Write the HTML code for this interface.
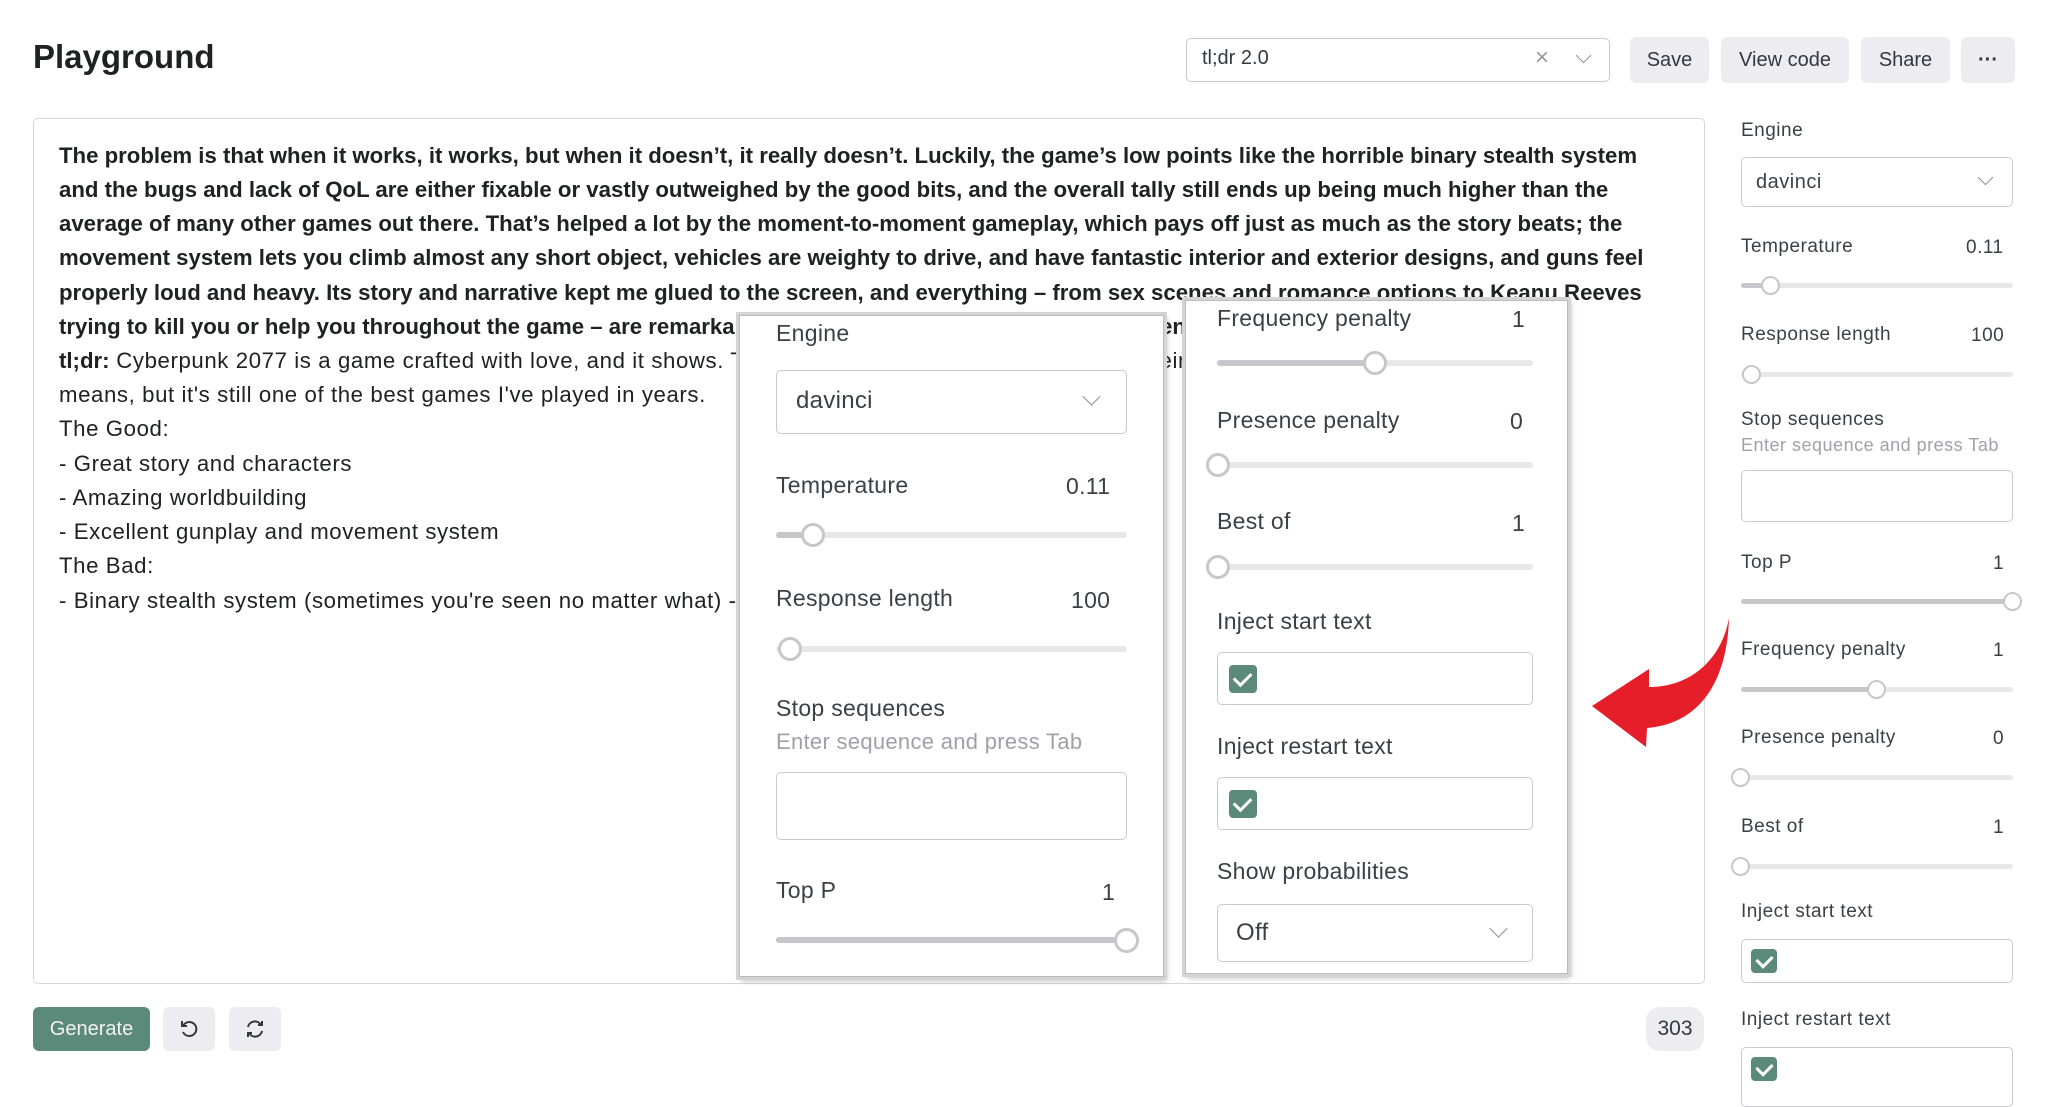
<!DOCTYPE html>
<html><head><meta charset="utf-8"><style>
*{box-sizing:border-box;margin:0;padding:0}
body{width:2048px;height:1094px;position:relative;overflow:hidden;background:#fff;font-family:"Liberation Sans",sans-serif;color:#353740}
.a{position:absolute;white-space:nowrap}
.btn{position:absolute;background:#ececf1;border-radius:6px;font-size:20px;color:#353740;display:flex;align-items:center;justify-content:center}
.ln{position:absolute;left:59px;font-size:22.2px;line-height:34px;white-space:nowrap;color:#202123;letter-spacing:0.6px}
.b{font-weight:bold;letter-spacing:0}
.box{position:absolute;border:1.5px solid #c9c9cf;border-radius:5px;background:#fff}
.tr{position:absolute;height:6px;border-radius:3px;background:#e8e8ea}
.fl{position:absolute;height:6px;border-radius:3px;background:#c6c6cb;left:0;top:0}
.th{position:absolute;border-radius:50%;background:#fff;border:3px solid #c6c6cb}
.chev{position:absolute;width:13px;height:13px;border-right:1.6px solid #8e8ea0;border-bottom:1.6px solid #8e8ea0;transform:rotate(45deg)}
.cb{position:absolute;background:#5b8a7b;border-radius:4px}
.cb:after{content:"";position:absolute;left:30%;top:14%;width:30%;height:50%;border-right:3px solid #fff;border-bottom:3px solid #fff;transform:rotate(45deg)}
.pop{position:absolute;background:#fff;border:1px solid #bbb;box-shadow:0 0 0 3px #d4d4d4,2px 3px 6px rgba(0,0,0,.35)}
.pl{font-size:23px;color:#3d3f46;letter-spacing:0.3px}
.sl{font-size:19px;color:#3d3f46;letter-spacing:0.5px}
</style></head><body>
<div class="a" style="left:33px;top:38px;font-size:33px;font-weight:bold;color:#202123">Playground</div>

<div class="box" style="left:1186px;top:38px;width:424px;height:44px"></div>
<div class="a" style="left:1202px;top:47px;font-size:20px">tl;dr 2.0</div>
<div class="a" style="left:1535px;top:44px;font-size:24px;color:#999">×</div>
<div class="chev" style="left:1578px;top:50px;width:11px;height:11px"></div>
<div class="btn" style="left:1630px;top:37px;width:79px;height:46px">Save</div>
<div class="btn" style="left:1721px;top:37px;width:128px;height:46px">View code</div>
<div class="btn" style="left:1861px;top:37px;width:89px;height:46px">Share</div>
<div class="btn" style="left:1961px;top:37px;width:54px;height:46px;font-weight:bold">···</div>

<div class="box" style="left:33px;top:118px;width:1672px;height:866px;border-color:#d5d5da"></div>
<div class="ln b" style="top:139px">The problem is that when it works, it works, but when it doesn’t, it really doesn’t. Luckily, the game’s low points like the horrible binary stealth system</div>
<div class="ln b" style="top:173px">and the bugs and lack of QoL are either fixable or vastly outweighed by the good bits, and the overall tally still ends up being much higher than the</div>
<div class="ln b" style="top:207px">average of many other games out there. That’s helped a lot by the moment-to-moment gameplay, which pays off just as much as the story beats; the</div>
<div class="ln b" style="top:241px">movement system lets you climb almost any short object, vehicles are weighty to drive, and have fantastic interior and exterior designs, and guns feel</div>
<div class="ln b" style="top:276px">properly loud and heavy. Its story and narrative kept me glued to the screen, and everything – from sex scenes and romance options to Keanu Reeves</div>
<div class="ln b" style="top:310px">trying to kill you or help you throughout the game – are remarkable and memorable characters and moments.</div>
<div class="ln" style="top:344px"><b style="letter-spacing:0">tl;dr:</b> Cyberpunk 2077 is a game crafted with love, and it shows. The bugs and rough edges keep it from being perfect by any</div>
<div class="ln" style="top:378px">means, but it's still one of the best games I've played in years.</div>
<div class="ln" style="top:412px">The Good:</div>
<div class="ln" style="top:447px">- Great story and characters</div>
<div class="ln" style="top:481px">- Amazing worldbuilding</div>
<div class="ln" style="top:515px">- Excellent gunplay and movement system</div>
<div class="ln" style="top:549px">The Bad:</div>
<div class="ln" style="top:584px">- Binary stealth system (sometimes you're seen no matter what) - bugs</div>

<div class="btn" style="left:33px;top:1007px;width:117px;height:44px;background:#5b8a7b;color:#f2f2f2">Generate</div>
<div class="btn" style="left:163px;top:1007px;width:52px;height:44px">
<svg width="22" height="22" viewBox="0 0 22 22" fill="none" stroke="#353740" stroke-width="2"><path d="M5 8a7 7 0 1 1 0 6"/><path d="M4 3v5h5"/></svg></div>
<div class="btn" style="left:229px;top:1007px;width:52px;height:44px">
<svg width="22" height="22" viewBox="0 0 22 22" fill="none" stroke="#353740" stroke-width="2"><path d="M4 9a7 7 0 0 1 13-2"/><path d="M18 3v4h-4"/><path d="M18 13a7 7 0 0 1-13 2"/><path d="M4 19v-4h4"/></svg></div>
<div class="btn" style="left:1646px;top:1007px;width:58px;height:44px;border-radius:14px;font-size:21px">303</div>

<!-- popup 1 -->
<div class="pop" style="left:739px;top:315px;width:425px;height:662px"></div>
<div class="a pl" style="left:776px;top:320px">Engine</div>
<div class="box" style="left:776px;top:370px;width:351px;height:64px"></div>
<div class="a pl" style="left:796px;top:387px;font-size:24px">davinci</div>
<div class="chev" style="left:1085px;top:390px"></div>
<div class="a pl" style="left:776px;top:472px">Temperature</div>
<div class="a pl" style="left:1066px;top:473px">0.11</div>
<div class="tr" style="left:776px;top:532px;width:351px"><div class="fl" style="width:38px"></div></div>
<div class="th" style="left:801px;top:523px;width:24px;height:24px"></div>
<div class="a pl" style="left:776px;top:585px">Response length</div>
<div class="a pl" style="left:1071px;top:587px">100</div>
<div class="tr" style="left:776px;top:646px;width:351px"></div>
<div class="th" style="left:778px;top:637px;width:24px;height:24px"></div>
<div class="a pl" style="left:776px;top:695px">Stop sequences</div>
<div class="a pl" style="left:776px;top:729px;color:#a0a0a8;font-size:22px">Enter sequence and press Tab</div>
<div class="box" style="left:776px;top:772px;width:351px;height:68px"></div>
<div class="a pl" style="left:776px;top:877px">Top P</div>
<div class="a pl" style="left:1102px;top:879px">1</div>
<div class="tr" style="left:776px;top:937px;width:351px"><div class="fl" style="width:351px"></div></div>
<div class="th" style="left:1114px;top:928px;width:25px;height:25px"></div>

<!-- popup 2 -->
<div class="pop" style="left:1185px;top:300px;width:383px;height:674px"></div>
<div class="a pl" style="left:1217px;top:305px">Frequency penalty</div>
<div class="a pl" style="left:1512px;top:306px">1</div>
<div class="tr" style="left:1217px;top:360px;width:316px"><div class="fl" style="width:158px"></div></div>
<div class="th" style="left:1363px;top:351px;width:24px;height:24px"></div>
<div class="a pl" style="left:1217px;top:407px">Presence penalty</div>
<div class="a pl" style="left:1510px;top:408px">0</div>
<div class="tr" style="left:1217px;top:462px;width:316px"></div>
<div class="th" style="left:1206px;top:453px;width:24px;height:24px"></div>
<div class="a pl" style="left:1217px;top:508px">Best of</div>
<div class="a pl" style="left:1512px;top:510px">1</div>
<div class="tr" style="left:1217px;top:564px;width:316px"></div>
<div class="th" style="left:1206px;top:555px;width:24px;height:24px"></div>
<div class="a pl" style="left:1217px;top:608px">Inject start text</div>
<div class="box" style="left:1217px;top:652px;width:316px;height:53px"></div>
<div class="cb" style="left:1229px;top:665px;width:28px;height:28px"></div>
<div class="a pl" style="left:1217px;top:733px">Inject restart text</div>
<div class="box" style="left:1217px;top:777px;width:316px;height:53px"></div>
<div class="cb" style="left:1229px;top:790px;width:28px;height:28px"></div>
<div class="a pl" style="left:1217px;top:858px">Show probabilities</div>
<div class="box" style="left:1217px;top:904px;width:316px;height:58px"></div>
<div class="a pl" style="left:1236px;top:919px;font-size:24px">Off</div>
<div class="chev" style="left:1492px;top:922px"></div>

<!-- arrow -->
<svg class="a" style="left:0;top:0" width="2048" height="1094"><path d="M1592 706 L1649 669 L1649 687 C1692 687 1722 658 1729 618 C1727 684 1698 724 1647 728 L1646 747 Z" fill="#e61e2a"/></svg>

<!-- sidebar -->
<div class="a sl" style="left:1741px;top:120px">Engine</div>
<div class="box" style="left:1741px;top:157px;width:272px;height:50px"></div>
<div class="a sl" style="left:1756px;top:171px;font-size:20px">davinci</div>
<div class="chev" style="left:1980px;top:172px;width:11px;height:11px"></div>
<div class="a sl" style="left:1741px;top:236px">Temperature</div>
<div class="a sl" style="left:1966px;top:237px">0.11</div>
<div class="tr" style="left:1741px;top:283px;width:272px;height:5px"><div class="fl" style="width:28px;height:5px"></div></div>
<div class="th" style="left:1761px;top:276px;width:19px;height:19px;border-width:2.5px"></div>
<div class="a sl" style="left:1741px;top:324px">Response length</div>
<div class="a sl" style="left:1971px;top:325px">100</div>
<div class="tr" style="left:1741px;top:372px;width:272px;height:5px"></div>
<div class="th" style="left:1742px;top:365px;width:19px;height:19px;border-width:2.5px"></div>
<div class="a sl" style="left:1741px;top:409px">Stop sequences</div>
<div class="a sl" style="left:1741px;top:435px;color:#a0a0a8;font-size:18px">Enter sequence and press Tab</div>
<div class="box" style="left:1741px;top:470px;width:272px;height:52px"></div>
<div class="a sl" style="left:1741px;top:552px">Top P</div>
<div class="a sl" style="left:1993px;top:553px">1</div>
<div class="tr" style="left:1741px;top:599px;width:272px;height:5px"><div class="fl" style="width:272px;height:5px"></div></div>
<div class="th" style="left:2003px;top:592px;width:19px;height:19px;border-width:2.5px"></div>
<div class="a sl" style="left:1741px;top:639px">Frequency penalty</div>
<div class="a sl" style="left:1993px;top:640px">1</div>
<div class="tr" style="left:1741px;top:687px;width:272px;height:5px"><div class="fl" style="width:136px;height:5px"></div></div>
<div class="th" style="left:1867px;top:680px;width:19px;height:19px;border-width:2.5px"></div>
<div class="a sl" style="left:1741px;top:727px">Presence penalty</div>
<div class="a sl" style="left:1993px;top:728px">0</div>
<div class="tr" style="left:1741px;top:775px;width:272px;height:5px"></div>
<div class="th" style="left:1731px;top:768px;width:19px;height:19px;border-width:2.5px"></div>
<div class="a sl" style="left:1741px;top:816px">Best of</div>
<div class="a sl" style="left:1993px;top:817px">1</div>
<div class="tr" style="left:1741px;top:864px;width:272px;height:5px"></div>
<div class="th" style="left:1731px;top:857px;width:19px;height:19px;border-width:2.5px"></div>
<div class="a sl" style="left:1741px;top:901px">Inject start text</div>
<div class="box" style="left:1741px;top:939px;width:272px;height:44px"></div>
<div class="cb" style="left:1751px;top:949px;width:26px;height:24px"></div>
<div class="a sl" style="left:1741px;top:1009px">Inject restart text</div>
<div class="box" style="left:1741px;top:1047px;width:272px;height:60px"></div>
<div class="cb" style="left:1751px;top:1057px;width:26px;height:24px"></div>
</body></html>
